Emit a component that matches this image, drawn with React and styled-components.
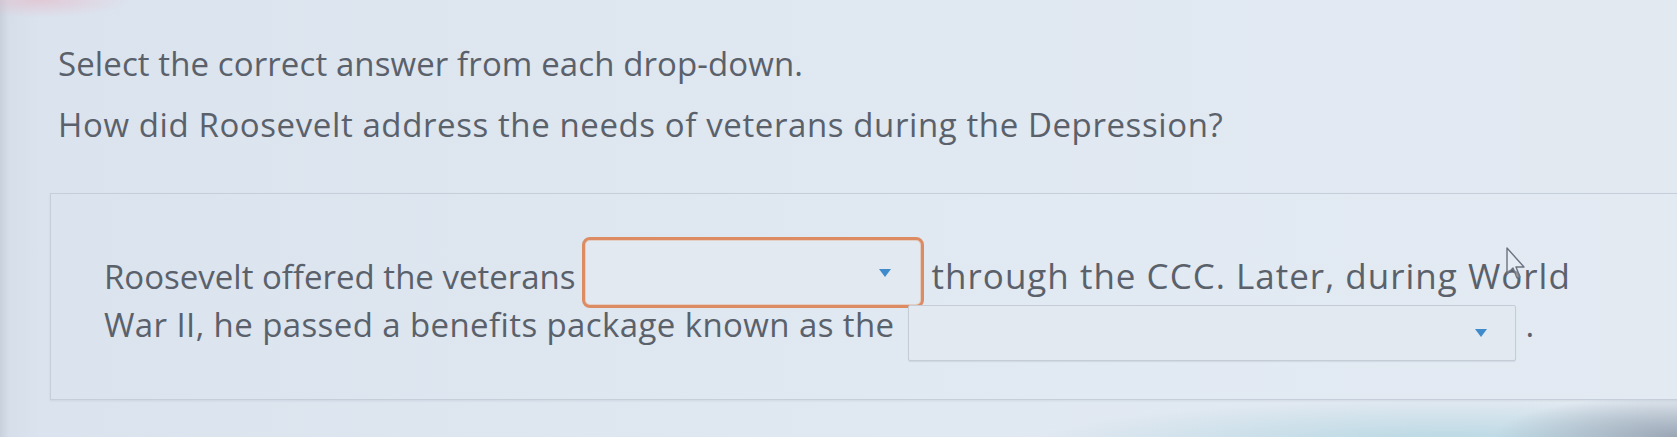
import React from "react";
import styled, { createGlobalStyle } from "styled-components";

const GlobalStyle = createGlobalStyle`
  html, body {
    margin: 0;
    padding: 0;
  }
  body {
    background: #dce5ee;
    font-family: "Open Sans", "Noto Sans", sans-serif;
  }
`;

const Screen = styled.div`
  position: relative;
  display: flex;
  flex-direction: column;
  width: 1677px;
  height: 437px;
  overflow: hidden;
  box-sizing: border-box;
  padding: 44px 0 0 58px;
  color: #5a616b;
  background:
    radial-gradient(ellipse 260px 60px at 1677px 437px, rgba(150, 160, 175, 0.9), transparent 70%),
    radial-gradient(ellipse 560px 60px at 1450px 445px, rgba(170, 210, 222, 0.8), transparent 75%),
    radial-gradient(ellipse 110px 22px at 40px 0px, rgba(230, 180, 195, 0.55), transparent 80%),
    linear-gradient(to right, #c8d0db 0px, #d6dee9 9px, #dbe3ee 40px, #e0e8f1 900px, #e2e9f1 1677px);
`;

const Header = styled.div`
  display: flex;
  flex-direction: column;
  gap: 21px;
`;

const Instruction = styled.p`
  margin: 0;
  font-size: 33px;
  line-height: 40px;
  letter-spacing: ${(p) => p.$tracking || 0.1}px;
`;

const AnswerBox = styled.div`
  margin: 48px -40px 0 -8px;
  height: 207px;
  box-sizing: border-box;
  padding: 58px 0 0 53px;
  border: 1px solid #c6cfd9;
  border-right: none;
  background: linear-gradient(to right, #dbe4ee, #e1e9f2 60%, #e3eaf2);
  box-shadow: 0 1px 2px rgba(120, 135, 150, 0.15);
`;

const Sentence = styled.p`
  margin: 0;
  width: 1490px;
  font-size: 33px;
  line-height: 48px;
`;

const Phrase = styled.span`
  font-size: ${(p) => p.$size || 33}px;
  letter-spacing: ${(p) => p.$tracking}px;
`;

const Dropdown = styled.span`
  position: relative;
  display: inline-block;
  overflow: hidden;
  box-sizing: border-box;
  width: ${(p) => p.$width}px;
  height: ${(p) => p.$height}px;
  margin: ${(p) => (p.$focused ? "-15px 8px -8px 6px" : "0 10px -13px 13px")};
  vertical-align: -11px;
  background: #e2e9f1;
  border: ${(p) => (p.$focused ? "3px solid #dc8b63" : "1.5px solid #c5ccd5")};
  border-radius: ${(p) => (p.$focused ? "8px" : "2px")};
  box-shadow: ${(p) =>
    p.$focused ? "inset 0 0 0 1px rgba(230, 180, 150, 0.5)" : "0 1px 1px rgba(140, 150, 165, 0.2)"};
`;

const Arrow = styled.span`
  position: absolute;
  right: ${(p) => p.$right}px;
  top: 50%;
  margin-top: -4px;
  width: 0;
  height: 0;
  border-left: 6px solid transparent;
  border-right: 6px solid transparent;
  border-top: 8px solid #3f8bcb;
`;

const Cursor = styled.svg`
  position: absolute;
  left: 1505px;
  top: 246px;
  width: 22px;
  height: 34px;
  pointer-events: none;
`;

export default function App() {
  return (
    <>
      <GlobalStyle />
      <Screen>
        <Header>
          <Instruction>Select the correct answer from each drop-down.</Instruction>
          <Instruction $tracking={0.6}>
            How did Roosevelt address the needs of veterans during the Depression?
          </Instruction>
        </Header>
        <AnswerBox>
          <Sentence>
            <Phrase $tracking={0}>Roosevelt offered the veterans</Phrase>
            <Dropdown $focused $width={342} $height={71}>
              <Arrow $right={30} />
            </Dropdown>
            <Phrase $size={35} $tracking={1}>through the CCC. Later, during World</Phrase>{" "}
            <Phrase $tracking={0.4}>War II, he passed a benefits package known as the</Phrase>
            <Dropdown $width={608} $height={56}>
              <Arrow $right={28} />
            </Dropdown>
            .
          </Sentence>
        </AnswerBox>
        <Cursor viewBox="0 0 22 34">
          <path
            d="M2 2 L2 28 L8 22 L12 32 L15 31 L11 21 L19 21 Z"
            fill="rgba(235, 240, 246, 0.35)"
            stroke="#6c7380"
            strokeWidth="1.4"
            strokeLinejoin="round"
          />
        </Cursor>
      </Screen>
    </>
  );
}
